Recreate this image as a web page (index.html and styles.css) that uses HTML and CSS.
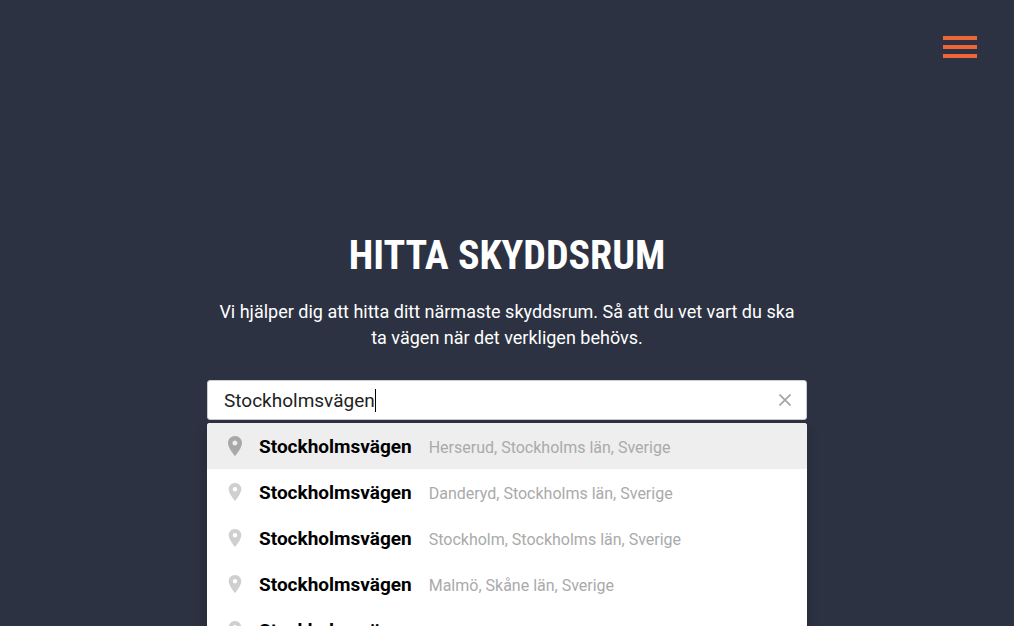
FILE: index.html
```html
<!DOCTYPE html>
<html lang="sv">
<head>
<meta charset="utf-8">
<meta name="viewport" content="width=device-width, initial-scale=1">
<title>Hitta skyddsrum</title>
<link rel="stylesheet" href="styles.css">
</head>
<body>
<svg class="sprite" aria-hidden="true"><symbol id="pin" viewBox="5 2 14 20"><path d="M12 2C8.13 2 5 5.13 5 9c0 5.25 7 13 7 13s7-7.75 7-13c0-3.87-3.13-7-7-7zm0 9.5a2.5 2.5 0 1 1 0-5 2.5 2.5 0 0 1 0 5z"/></symbol></svg>
<header class="header">
  <button class="menu" type="button" aria-label="Meny">
    <span class="menu-bar"></span><span class="menu-bar"></span><span class="menu-bar"></span>
  </button>
</header>
<main class="main">
  <h1 class="title">HITTA SKYDDSRUM</h1>
  <p class="intro">Vi hjälper dig att hitta ditt närmaste skyddsrum. Så att du vet vart du ska ta vägen när det verkligen behövs.</p>
  <form class="search">
    <input class="search-input" type="text" value="Stockholmsvägen" aria-label="Sök adress" autocomplete="off">
    <span class="caret"></span>
    <button class="clear" type="button" aria-label="Rensa">
      <svg class="clear-icon" viewBox="0 0 12 12"><path d="M0.5 0.5l11 11M11.5 0.5L0.5 11.5"/></svg>
    </button>
    <ul class="results">
      <li class="result result-active"><svg class="pin"><use href="#pin"/></svg><strong class="street">Stockholmsvägen</strong><span class="area">Herserud, Stockholms län, Sverige</span></li>
      <li class="result"><svg class="pin"><use href="#pin"/></svg><strong class="street">Stockholmsvägen</strong><span class="area">Danderyd, Stockholms län, Sverige</span></li>
      <li class="result"><svg class="pin"><use href="#pin"/></svg><strong class="street">Stockholmsvägen</strong><span class="area">Stockholm, Stockholms län, Sverige</span></li>
      <li class="result"><svg class="pin"><use href="#pin"/></svg><strong class="street">Stockholmsvägen</strong><span class="area">Malmö, Skåne län, Sverige</span></li>
      <li class="result"><svg class="pin"><use href="#pin"/></svg><strong class="street">Stockholmsvägen</strong></li>
    </ul>
  </form>
</main>
</body>
</html>
```
FILE: styles.css
```css
* {
  box-sizing: border-box;
}

body {
  margin: 0;
  min-height: 100vh;
  overflow: hidden;
  background: #2c3242;
  color: #fff;
  font-family: Roboto, "Liberation Sans", sans-serif;
}

.sprite {
  position: absolute;
  width: 0;
  height: 0;
}

.header {
  display: flex;
  justify-content: flex-end;
  padding: 32px 34px;
}

.menu {
  display: flex;
  flex-direction: column;
  gap: 5px;
  padding: 4px 3px;
  border: 0;
  background: none;
}

.menu-bar {
  width: 34px;
  height: 4px;
  background: #ee6537;
}

.main {
  max-width: 600px;
  margin: 0 auto;
  padding-top: 138px;
}

.title {
  margin: 0 0 19px;
  font-family: "Roboto Condensed", "Liberation Sans Narrow", "Open Sans Condensed", Roboto, sans-serif;
  font-size: 40px;
  line-height: 48px;
  font-weight: 700;
  text-align: center;
}

.intro {
  margin: 0 0 29px;
  padding: 0 8px;
  font-size: 18px;
  line-height: 26px;
  text-align: center;
}

.search {
  position: relative;
}

.search-input {
  display: block;
  width: 100%;
  height: 40px;
  padding: 0 48px 0 16px;
  border: 1px solid #ccc;
  border-radius: 3px;
  outline: 0;
  background: #fff;
  color: #222;
  font: inherit;
  font-size: 19px;
}

.caret {
  position: absolute;
  top: 9px;
  left: 168px;
  width: 1px;
  height: 23px;
  background: #000;
}

.clear {
  position: absolute;
  top: 8px;
  right: 10px;
  display: flex;
  padding: 6px;
  border: 0;
  background: none;
}

.clear-icon {
  width: 12px;
  height: 12px;
  fill: none;
  stroke: #a2a2a2;
  stroke-width: 1.6;
}

.results {
  position: absolute;
  top: 43px;
  left: 0;
  right: 0;
  margin: 0;
  padding: 0;
  overflow: hidden;
  list-style: none;
  border-radius: 3px;
  background: #fff;
  box-shadow: 0 6px 12px #0003;
}

.result {
  display: flex;
  align-items: center;
  height: 46px;
  padding: 0 20px;
}

.result-active {
  background: #eee;
}

.pin {
  width: 16px;
  height: 18px;
  margin-right: 16px;
  fill: #cfcfcf;
}

.result-active .pin {
  height: 20px;
  fill: #a8a8a8;
}

.street {
  margin-right: 17px;
  color: #000;
  font-size: 19px;
  font-weight: 700;
}

.area {
  padding-top: 2px;
  color: #aaa;
  font-size: 16px;
}
```
